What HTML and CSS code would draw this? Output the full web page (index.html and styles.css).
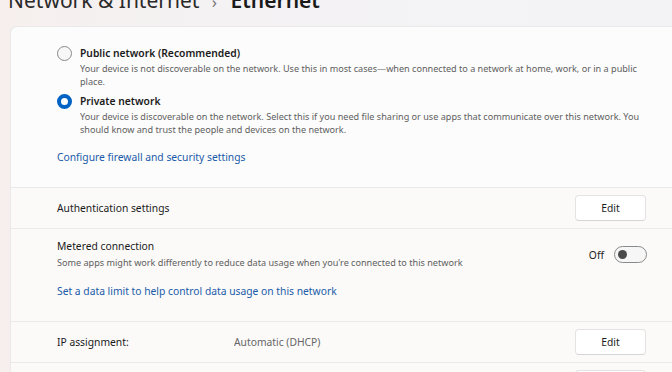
FILE: index.html
```html
<html>
<head>
  <meta charset="UTF-8">
  <title>Ethernet</title>
  <link rel="stylesheet" href="styles.css">
</head>
<body>

<h1 class="crumbs">
  <span class="crumb">Network &amp; Internet</span>
  <span class="sep">&#8250;</span>
  <span class="current">Ethernet</span>
</h1>

<div class="card">

  <div class="panel profile">
    <label class="radio">
      <span class="dot"></span>
      <span class="opt">
        <span class="opt-title">Public network (Recommended)</span>
        <span class="opt-desc">Your device is not discoverable on the network. Use this in most cases—when connected to a network at home, work, or in a public place.</span>
      </span>
    </label>
    <label class="radio checked">
      <span class="dot"></span>
      <span class="opt">
        <span class="opt-title">Private network</span>
        <span class="opt-desc">Your device is discoverable on the network. Select this if you need file sharing or use apps that communicate over this network. You should know and trust the people and devices on the network.</span>
      </span>
    </label>
    <a class="link fw" href="#">Configure firewall and security settings</a>
  </div>

  <div class="panel row">
    <span class="label">Authentication settings</span>
    <button class="btn">Edit</button>
  </div>

  <div class="panel metered">
    <div class="row-inner">
      <div>
        <div class="label">Metered connection</div>
        <div class="sub">Some apps might work differently to reduce data usage when you're connected to this network</div>
      </div>
      <div class="toggle-wrap">
        <span class="state">Off</span>
        <span class="toggle"><span class="knob"></span></span>
      </div>
    </div>
    <a class="link limit" href="#">Set a data limit to help control data usage on this network</a>
  </div>

  <div class="panel row">
    <span class="label ip">IP assignment:</span>
    <span class="value">Automatic (DHCP)</span>
    <button class="btn">Edit</button>
  </div>

  <div class="panel row">
    <span class="label ip">DNS server assignment:</span>
    <span class="value">Automatic (DHCP)</span>
    <button class="btn">Edit</button>
  </div>

</div>

</body>
</html>
```

FILE: styles.css
```css
body {
  margin: 0;
  padding: 0;
  overflow: hidden;
  font: 10.3px/14px "Noto Sans", sans-serif;
  color: #1b1b1b;
  background: linear-gradient(to right, #f6efee 0, #f4f2f3 30%, #f3f3f6 100%);
}

.crumbs {
  margin: -13px 0 0 8px;
  font-size: 21px;
  line-height: 27px;
  font-weight: normal;
  white-space: nowrap;
  color: #2a2a2a;
}
.crumbs .sep { color: #777; font-size: 17px; margin: 0 8px 0 7px; }
.crumbs .current { font-weight: 600; color: #1a1a1a; }

.card {
  margin: 11px 0 0 10px;
  width: calc(100% - 10px);
  display: flex;
  flex-direction: column;
  gap: 1px;
  background: #ece9e8;
  border-top: 1px solid #ebe9e9;
  border-left: 1px solid #ebe9e9;
  border-radius: 6px 0 0 0;
}

.panel {
  background: #fbfaf9;
  padding: 0 26px 0 46px;
}
.panel:first-child { border-radius: 6px 0 0 0; background: #fcfcfc; }

.profile { padding-top: 19px; padding-bottom: 23px; }

.radio {
  display: flex;
  align-items: flex-start;
  gap: 8px;
  margin-bottom: 6px;
}
.dot {
  flex: none;
  box-sizing: border-box;
  width: 15px;
  height: 15px;
  border-radius: 50%;
  border: 1px solid #8a8a8a;
  background: #f7f7f7;
}
.radio.checked .dot {
  border: 4px solid #0063c4;
  background: #fff;
}
.opt { display: flex; flex-direction: column; }
.opt-title { font-weight: 600; line-height: 15px; }
.opt-desc {
  font-size: 9.1px;
  line-height: 13px;
  color: #606060;
  margin-top: 1px;
  max-width: 565px;
}

.link {
  display: inline-block;
  color: #1a5aa8;
  text-decoration: none;
}
.fw { margin-top: 8px; }

.row {
  display: flex;
  align-items: center;
  height: 40px;
}
.row .label { flex: none; }
.row .ip { width: 177px; }
.row .value { color: #666; flex: 1; }
.row .label + .btn { margin-left: auto; }

.btn {
  width: 71px;
  height: 26px;
  margin-right: 1px;
  background: #fff;
  border: 1px solid #e4e2e2;
  border-bottom-color: #d6d4d4;
  border-radius: 4px;
  font: 10.3px "Noto Sans", sans-serif;
  color: #1b1b1b;
}

.metered { padding-top: 10px; height: 82px; }
.row-inner { display: flex; align-items: flex-start; justify-content: space-between; }
.sub { font-size: 9.1px; line-height: 13px; color: #606060; margin-top: 3px; }
.toggle-wrap { display: flex; align-items: center; gap: 10px; margin-top: 7px; }
.toggle {
  box-sizing: border-box;
  width: 33px;
  height: 17px;
  border: 1px solid #8a8a8a;
  border-radius: 9px;
  background: #f6f6f6;
  display: flex;
  align-items: center;
  padding-left: 3px;
}
.knob {
  width: 9px;
  height: 9px;
  border-radius: 50%;
  background: #4a4a4a;
}
.limit { margin-top: 15px; }
```
